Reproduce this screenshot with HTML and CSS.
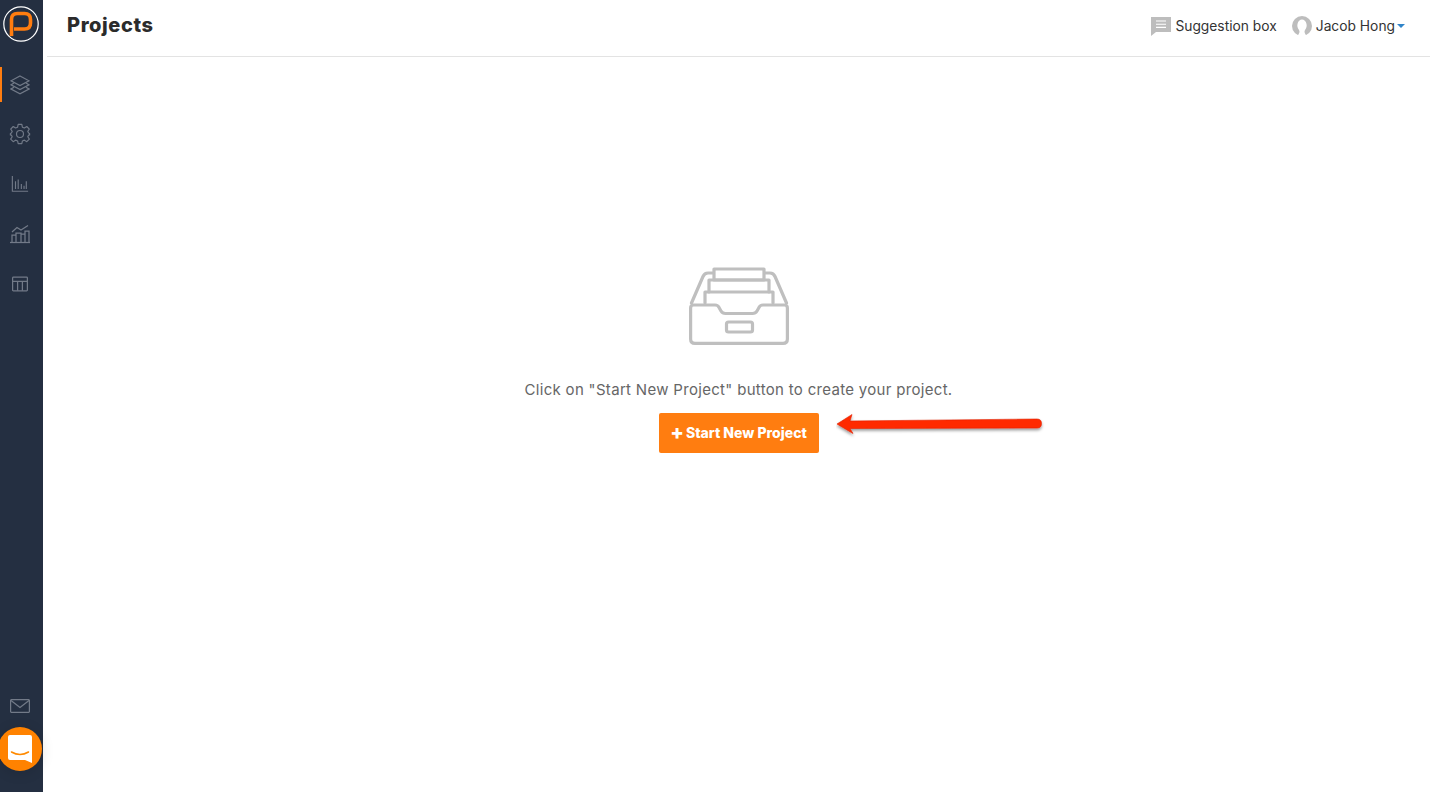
FILE: index.html
```html
<!DOCTYPE html>
<html lang="en">
<head>
    <meta charset="UTF-8">
    <title>Projects</title>
    <link rel="stylesheet" href="styles.css">
</head>
<body>
    <div class="app">
        <!-- Left navigation rail -->
        <nav class="sidebar">
            <div class="logo">
                <svg viewBox="0 0 36 36" width="36" height="36">
                    <circle cx="18" cy="18" r="17.2" fill="none" stroke="#fff" stroke-width="1.2"/>
                    <path d="M8.5 30 V13.5 Q8.5 7.5 14.5 7.5 H21.5 Q27.5 7.5 27.5 13.5 V17 Q27.5 23 21.5 23 H11" fill="none" stroke="#ff7d10" stroke-width="3.6"/>
                </svg>
            </div>
            <ul class="nav-list">
                <li class="nav-item active">
                    <svg viewBox="0 0 20 20" width="20" height="20" class="nav-icon">
                        <path d="M10 1 L19 5.8 L10 10.6 L1 5.8 Z"/>
                        <path d="M4 8 L1 9.8 L10 14.6 L19 9.8 L16 8"/>
                        <path d="M4 12.2 L1 14 L10 18.8 L19 14 L16 12.2"/>
                    </svg>
                </li>
                <li class="nav-item">
                    <svg viewBox="0 0 24 24" width="22" height="22" class="nav-icon">
                        <circle cx="12" cy="12" r="3.8"/>
                        <path d="M10 1.5 H14 L14.6 4.6 L16.8 5.5 L19.4 3.8 L22.2 6.6 L20.5 9.2 L21.4 11 L22.5 11.4 V13 L21.4 13.2 L20.5 15 L22.2 17.6 L19.4 20.4 L16.8 18.7 L14.6 19.6 L14 22.5 H10 L9.4 19.6 L7.2 18.7 L4.6 20.4 L1.8 17.6 L3.5 15 L2.6 13.2 L1.5 13 V11.4 L2.6 11 L3.5 9.2 L1.8 6.6 L4.6 3.8 L7.2 5.5 L9.4 4.6 Z" stroke-linejoin="round"/>
                    </svg>
                </li>
                <li class="nav-item">
                    <svg viewBox="0 0 20 20" width="18" height="18" class="nav-icon">
                        <path d="M1.5 1 V18 H19"/>
                        <path d="M5 7 V15.5 M8 5 V15.5 M11.5 10 V15.5 M14.5 12 V15.5 M17 7 V15.5"/>
                    </svg>
                </li>
                <li class="nav-item">
                    <svg viewBox="0 0 22 20" width="22" height="20" class="nav-icon">
                        <path d="M1 18.5 H21"/>
                        <path d="M3 18.5 V11 H7 V18.5 M7 18.5 V9 H12 V18.5 M12 18.5 V10 H16 V18.5 M16 18.5 V7 H20 V18.5"/>
                        <path d="M3 8 L8 3.5 L12 6 L19 1.5"/>
                    </svg>
                </li>
                <li class="nav-item">
                    <svg viewBox="0 0 16 16" width="16" height="16" class="nav-icon">
                        <rect x="0.6" y="1.2" width="14.8" height="13.6" rx="0.8"/>
                        <path d="M0.6 5.4 H15.4 M5.6 5.4 V14.8 M10.4 5.4 V14.8"/>
                    </svg>
                </li>
            </ul>
            <div class="nav-bottom">
                <svg viewBox="0 0 20 14" width="20" height="14" class="nav-icon">
                    <rect x="0.6" y="0.6" width="18.8" height="12.8" rx="1"/>
                    <path d="M1 1.5 L10 8.5 L19 1.5"/>
                </svg>
            </div>
        </nav>

        <div class="main">
            <header class="topbar">
                <h1 class="page-title">Projects</h1>
                <div class="top-actions">
                    <a class="top-link">
                        <svg viewBox="0 0 20 20" width="20" height="20">
                            <path d="M0 1 H20 V16 H5 L0 20 Z" fill="#bdbdbd"/>
                            <path d="M5 5 H15 M5 8.2 H15 M5 11.4 H15" stroke="#fff" stroke-width="1.1"/>
                        </svg>
                        <span>Suggestion box</span>
                    </a>
                    <a class="top-link">
                        <svg viewBox="0 0 20 20" width="20" height="20">
                            <circle cx="10" cy="10" r="10" fill="#bdbdbd"/>
                            <path d="M5.5 20 C7.5 17 8 15.5 7 14 C5.5 12 5 10 5.5 8 C6 5 8 3.5 10 3.5 C12 3.5 14 5 14.5 8 C15 10 14.5 12 13 14 C12 15.5 12.5 17 14.5 20 Z" fill="#fff"/>
                        </svg>
                        <span>Jacob Hong</span>
                        <i class="caret"></i>
                    </a>
                </div>
            </header>

            <section class="empty">
                <svg class="empty-icon" viewBox="0 0 100 78" width="100" height="78">
                    <rect x="25" y="2" width="50" height="11"/>
                    <path d="M20 25 V13 H80 V25"/>
                    <path d="M16 36 V25 H84 V36"/>
                    <path d="M24 6 H19 Q15.5 6 14 9.5 L2.5 36 M76 6 H81 Q84.5 6 86 9.5 L97.5 36"/>
                    <path d="M1.6 41 Q1.6 38 4.6 38 H26 Q29 38 30 40.5 L32 44 Q33.5 46.5 36.5 46.5 H63.5 Q66.5 46.5 68 44 L70 40.5 Q71 38 74 38 H95.4 Q98.4 38 98.4 41 V72 Q98.4 76.4 94 76.4 H6 Q1.6 76.4 1.6 72 Z"/>
                    <rect x="37.5" y="55" width="26" height="10" rx="2"/>
                </svg>
                <p class="empty-text">Click on "Start New Project" button to create your project.</p>
                <button class="btn-start"><span class="plus">+</span>Start New Project</button>
            </section>
        </div>
    </div>

    <!-- Hand-drawn annotation arrow on top of the screenshot -->
    <svg class="arrow" viewBox="0 0 210 26" width="210" height="26">
        <defs>
            <filter id="arrowShadow" x="-5%" y="-30%" width="110%" height="180%">
                <feDropShadow dx="0" dy="2" stdDeviation="1.4" flood-color="#000" flood-opacity="0.4"/>
            </filter>
        </defs>
        <path d="M1 11 L16 1.5 L14 8 L201 6 Q205.5 6 205.5 10.5 Q205.5 15 201 15 L14 15.5 L17 20.5 Z" fill="#ff2a00" stroke="#e02400" stroke-width="0.6" filter="url(#arrowShadow)"/>
    </svg>

    <!-- Chat launcher sits over the sidebar -->
    <div class="chat">
        <svg viewBox="0 0 26 30" width="26" height="30">
            <path d="M3 1 H23 Q25 1 25 3 V29 L18 26 H3 Q1 26 1 24 V3 Q1 1 3 1 Z" fill="#fff"/>
            <path d="M4.5 18 Q13 23 21.5 18" fill="none" stroke="#ff8a00" stroke-width="1.5" stroke-linecap="round"/>
        </svg>
    </div>
</body>
</html>
```

FILE: styles.css
```css
html, body {
    margin: 0;
    padding: 0;
    height: 100%;
    overflow: hidden;
    background: #fff;
    font-family: 'Inter', 'Roboto', sans-serif;
    color: #333;
}

.app {
    display: flex;
    height: 792px;
}

/* Sidebar */
.sidebar {
    width: 43px;
    flex-shrink: 0;
    background: #242f41;
    display: flex;
    flex-direction: column;
    align-items: center;
    box-sizing: border-box;
    padding-bottom: 79px;
}

.logo {
    height: 50px;
    padding-top: 6px;
    box-sizing: border-box;
    margin-left: -2px;
}

.nav-list {
    list-style: none;
    margin: 9px 0 0;
    padding: 0;
    width: 100%;
    flex: 1;
}

.nav-item {
    height: 50px;
    display: flex;
    align-items: center;
    justify-content: center;
    margin-left: -4px;
    box-sizing: border-box;
}

.nav-item.active {
    height: 35px;
    margin: 8px 0 7px;
    padding-right: 6px;
    border-left: 2px solid #ff7d10;
}

.nav-icon {
    fill: none;
    stroke: #727a88;
    stroke-width: 1.25;
}

.nav-bottom {
    margin-left: -4px;
    line-height: 0;
}

/* Main area */
.main {
    flex: 1;
    min-width: 0;
    display: flex;
    flex-direction: column;
}

.topbar {
    height: 57px;
    box-sizing: border-box;
    margin: 0 4px;
    padding: 0 25px 6px 20px;
    border-bottom: 1px solid #e3e3e3;
    display: flex;
    align-items: center;
    justify-content: space-between;
}

.page-title {
    margin: 0;
    font-size: 20px;
    font-weight: 800;
    letter-spacing: 0.6px;
    color: #2b2b2b;
}

.top-actions {
    display: flex;
    align-items: center;
    gap: 15px;
    padding-top: 2px;
}

.top-link {
    display: flex;
    align-items: center;
    gap: 4px;
    font-size: 13.8px;
    color: #333;
}

.top-link:first-child {
    margin-right: 0;
}

.caret {
    width: 0;
    height: 0;
    margin-left: -2px;
    border-left: 4px solid transparent;
    border-right: 4px solid transparent;
    border-top: 4px solid #2f84c9;
}

/* Empty state */
.empty {
    display: flex;
    flex-direction: column;
    align-items: center;
    padding-top: 210px;
}

.empty-icon {
    fill: none;
    stroke: #bfbfbf;
    stroke-width: 3.2;
    stroke-linejoin: round;
    stroke-linecap: round;
}

.empty-text {
    margin: 36px 0 14px;
    font-size: 15px;
    letter-spacing: 0.31px;
    line-height: 18px;
    color: #666;
}

.btn-start {
    width: 160px;
    height: 40px;
    border: 0;
    border-radius: 2px;
    padding: 0 0 2px;
    background: #ff7d10;
    color: #fff;
    font-family: inherit;
    font-size: 14px;
    font-weight: 800;
    display: flex;
    align-items: center;
    justify-content: center;
}

.plus {
    font-size: 20px;
    line-height: 18px;
    margin-right: 2px;
}

/* Overlays */
.arrow {
    position: absolute;
    left: 836px;
    top: 413px;
}

.chat {
    position: absolute;
    left: -2px;
    top: 727px;
    width: 44px;
    height: 44px;
    border-radius: 50%;
    background: #ff8200;
    display: flex;
    align-items: center;
    justify-content: center;
    box-shadow: 0 2px 14px rgba(0, 0, 0, 0.12);
}
```
